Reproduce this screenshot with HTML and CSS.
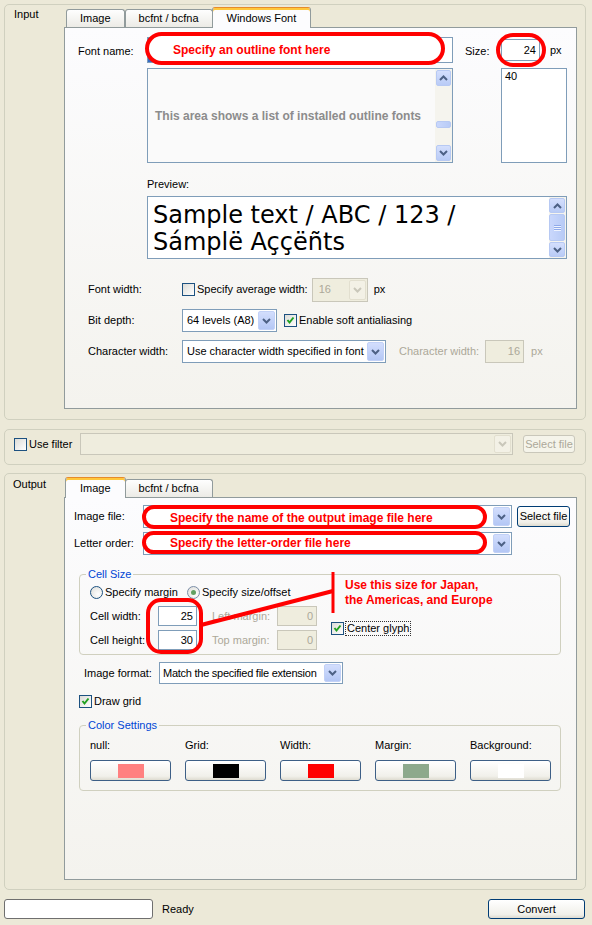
FILE: index.html
```html
<!DOCTYPE html>
<html>
<head>
<meta charset="utf-8">
<title>Font Converter</title>
<link rel="stylesheet" href="styles.css">
</head>
<body>
<div class="window">

  <section class="group group-input">
    <div class="group-label">Input</div>
    <div class="tabwidget tw-input">
      <div class="tabbar">
        <div class="tab">Image</div>
        <div class="tab">bcfnt / bcfna</div>
        <div class="tab active">Windows Font</div>
      </div>
      <div class="pane pane-input">
        <div class="top-block">
          <div class="fn-label">Font name:</div>
          <div class="fn-col">
            <div class="fn-field"><span class="sel"></span></div>
            <div class="fn-list">
              <div class="fn-list-body">This area shows a list of installed outline fonts</div>
              <div class="vscroll">
                <div class="sb-btn"><svg width="9" height="6" viewBox="0 0 9 6"><path d="M1 5 L4.5 1.5 L8 5" fill="none" stroke="#4d6185" stroke-width="2"/></svg></div>
                <div class="sb-track"><div class="sb-thumb tiny"></div></div>
                <div class="sb-btn"><svg width="9" height="6" viewBox="0 0 9 6"><path d="M1 1 L4.5 4.5 L8 1" fill="none" stroke="#4d6185" stroke-width="2"/></svg></div>
              </div>
            </div>
          </div>
          <div class="size-label">Size:</div>
          <div class="size-col">
            <div class="size-row"><div class="tf size-field">24</div><span class="px-size">px</span></div>
            <div class="size-list">40</div>
          </div>
        </div>

        <div class="preview-block">
          <div class="preview-label">Preview:</div>
          <div class="preview-box">
            <div class="preview-text">Sample text / ABC / 123 /<br>Sámplë Aççëñts</div>
            <div class="vscroll">
              <div class="sb-btn"><svg width="9" height="6" viewBox="0 0 9 6"><path d="M1 5 L4.5 1.5 L8 5" fill="none" stroke="#4d6185" stroke-width="2"/></svg></div>
              <div class="sb-track"><div class="sb-thumb full"><span class="grip"></span><span class="grip"></span><span class="grip"></span></div></div>
              <div class="sb-btn"><svg width="9" height="6" viewBox="0 0 9 6"><path d="M1 1 L4.5 4.5 L8 1" fill="none" stroke="#4d6185" stroke-width="2"/></svg></div>
            </div>
          </div>
        </div>

        <div class="form">
          <div class="frow">
            <div class="flabel">Font width:</div>
            <span class="cb"></span><span class="cbt">Specify average width:</span>
            <div class="combo dis c-avg"><span class="ct">16</span><span class="dd"><svg width="9" height="6" viewBox="0 0 9 6"><path d="M1 1 L4.5 4.5 L8 1" fill="none" stroke="#c9c7ba" stroke-width="2"/></svg></span></div>
            <span class="px-avg">px</span>
          </div>
          <div class="frow">
            <div class="flabel">Bit depth:</div>
            <div class="combo c-bit"><span class="ct">64 levels (A8)</span><span class="dd"><svg width="9" height="6" viewBox="0 0 9 6"><path d="M1 1 L4.5 4.5 L8 1" fill="none" stroke="#4d6185" stroke-width="2"/></svg></span></div>
            <span class="cb on cb-soft"><svg width="9" height="9" viewBox="0 0 9 9"><path d="M1.5 4 L3.5 6.5 L7.5 1.5" fill="none" stroke="#21a121" stroke-width="2"/></svg></span><span class="cbt">Enable soft antialiasing</span>
          </div>
          <div class="frow">
            <div class="flabel">Character width:</div>
            <div class="combo c-cw"><span class="ct">Use character width specified in font</span><span class="dd"><svg width="9" height="6" viewBox="0 0 9 6"><path d="M1 1 L4.5 4.5 L8 1" fill="none" stroke="#4d6185" stroke-width="2"/></svg></span></div>
            <span class="dis-label cw-label">Character width:</span>
            <div class="tf dis cw-field">16</div>
            <span class="dis-label px-cw">px</span>
          </div>
        </div>
      </div>
    </div>
  </section>

  <section class="group group-filter">
    <div class="filter-check"><span class="cb"></span><span class="cbt">Use filter</span></div>
    <div class="combo dis filter-combo"><span class="ct"></span><span class="dd"><svg width="9" height="6" viewBox="0 0 9 6"><path d="M1 1 L4.5 4.5 L8 1" fill="none" stroke="#c9c7ba" stroke-width="2"/></svg></span></div>
    <div class="btn dis btn-filter">Select file</div>
  </section>

  <section class="group group-output">
    <div class="group-label">Output</div>
    <div class="tabwidget tw-output">
      <div class="tabbar">
        <div class="tab active">Image</div>
        <div class="tab">bcfnt / bcfna</div>
      </div>
      <div class="pane pane-output">
        <div class="orow first">
          <div class="olabel">Image file:</div>
          <div class="combo ocombo"><span class="ct"></span><span class="dd"><svg width="9" height="6" viewBox="0 0 9 6"><path d="M1 1 L4.5 4.5 L8 1" fill="none" stroke="#4d6185" stroke-width="2"/></svg></span></div>
          <div class="btn btn-select">Select file</div>
        </div>
        <div class="orow">
          <div class="olabel">Letter order:</div>
          <div class="combo ocombo"><span class="ct"></span><span class="dd"><svg width="9" height="6" viewBox="0 0 9 6"><path d="M1 1 L4.5 4.5 L8 1" fill="none" stroke="#4d6185" stroke-width="2"/></svg></span></div>
        </div>

        <fieldset class="fs fs-cell">
          <legend>Cell Size</legend>
          <div class="radios">
            <div class="radio-item r1"><span class="rb"></span><span class="rbt">Specify margin</span></div>
            <div class="radio-item"><span class="rb on"></span><span class="rbt">Specify size/offset</span></div>
          </div>
          <div class="cell-area">
            <div class="cell-grid">
              <div class="crow">
                <span class="clabel">Cell width:</span><div class="tf cfield">25</div>
                <span class="dis-label clabel2">Left margin:</span><div class="tf dis cfield2">0</div>
              </div>
              <div class="crow">
                <span class="clabel">Cell height:</span><div class="tf cfield">30</div>
                <span class="dis-label clabel2">Top margin:</span><div class="tf dis cfield2">0</div>
              </div>
            </div>
            <span class="cb on cb-center"><svg width="9" height="9" viewBox="0 0 9 9"><path d="M1.5 4 L3.5 6.5 L7.5 1.5" fill="none" stroke="#21a121" stroke-width="2"/></svg></span><span class="cbt focus">Center glyph</span>
          </div>
        </fieldset>

        <div class="orow fmt-row">
          <div class="olabel fmt-label">Image format:</div>
          <div class="combo c-fmt"><span class="ct">Match the specified file extension</span><span class="dd"><svg width="9" height="6" viewBox="0 0 9 6"><path d="M1 1 L4.5 4.5 L8 1" fill="none" stroke="#4d6185" stroke-width="2"/></svg></span></div>
        </div>

        <div class="grid-row"><span class="cb on"><svg width="9" height="9" viewBox="0 0 9 9"><path d="M1.5 4 L3.5 6.5 L7.5 1.5" fill="none" stroke="#21a121" stroke-width="2"/></svg></span><span class="cbt">Draw grid</span></div>

        <fieldset class="fs fs-color">
          <legend>Color Settings</legend>
          <div class="colors">
            <div class="color-item"><div class="color-label">null:</div><div class="btn color-btn"><span class="swatch sw-null"></span></div></div>
            <div class="color-item"><div class="color-label">Grid:</div><div class="btn color-btn"><span class="swatch sw-grid"></span></div></div>
            <div class="color-item"><div class="color-label">Width:</div><div class="btn color-btn"><span class="swatch sw-width"></span></div></div>
            <div class="color-item"><div class="color-label">Margin:</div><div class="btn color-btn"><span class="swatch sw-margin"></span></div></div>
            <div class="color-item"><div class="color-label">Background:</div><div class="btn color-btn"><span class="swatch sw-bg"></span></div></div>
          </div>
        </fieldset>
      </div>
    </div>
  </section>

  <div class="statusbar">
    <div class="progress"></div>
    <span class="ready">Ready</span>
    <div class="btn btn-convert">Convert</div>
  </div>

  <svg class="annot" width="592" height="925" viewBox="0 0 592 925">
    <rect x="147" y="34" width="296" height="29" rx="14.5" fill="#fff" stroke="#f00" stroke-width="4"/>
    <rect x="498" y="35" width="46" height="30" rx="15" fill="none" stroke="#f00" stroke-width="4"/>
    <rect x="144" y="507" width="341" height="20" rx="10" fill="#fff" stroke="#f00" stroke-width="4"/>
    <rect x="144" y="533" width="341" height="19" rx="9.5" fill="#fff" stroke="#f00" stroke-width="4"/>
    <rect x="148" y="600" width="53" height="52" rx="13" fill="none" stroke="#f00" stroke-width="4"/>
    <line x1="201" y1="625" x2="333" y2="591" stroke="#f00" stroke-width="4"/>
    <line x1="333" y1="572" x2="333" y2="613" stroke="#f00" stroke-width="3"/>
  </svg>
  <div class="note note-font">Specify an outline font here</div>
  <div class="note note-image">Specify the name of the output image file here</div>
  <div class="note note-order">Specify the letter-order file here</div>
  <div class="note note-size">Use this size for Japan,<br>the Americas, and Europe</div>
</div>
</body>
</html>
```

FILE: styles.css
```css
* { box-sizing: border-box; }
html, body { margin: 0; padding: 0; }
body {
  background: #ece9d8;
  font-family: "Liberation Sans", Arial, sans-serif;
  font-size: 11px;
  line-height: 13px;
  color: #000;
}
.window {
  position: relative;
  width: 592px;
  height: 925px;
  padding-top: 4px;
  overflow: hidden;
}

/* group boxes */
.group {
  margin-left: 4px;
  width: 582px;
  border: 1px solid #d0d0bf;
  border-radius: 5px;
}
.group-input { height: 416px; display: flex; }
.group-output { height: 417px; display: flex; margin-top: 8px; }
.group-label { width: 59px; flex: none; padding: 3px 0 0 9px; }
.group-output .group-label { padding: 4px 0 0 8px; }

/* tabs */
.tabwidget { width: 513px; display: flex; flex-direction: column; }
.tw-input { margin-top: 2px; }
.tw-output { margin-top: 3px; }
.tabbar {
  display: flex;
  align-items: flex-end;
  height: 20px;
  padding-left: 2px;
  position: relative;
  z-index: 1;
}
.tab {
  height: 18px;
  padding: 0 13px;
  border: 1px solid #919b9c;
  border-bottom: none;
  border-radius: 3px 3px 0 0;
  background: linear-gradient(#fefefe, #ecebe6);
  line-height: 17px;
  white-space: nowrap;
}
.tab.active {
  height: 21px;
  margin: 0 -1px -1px -1px;
  padding: 2px 14px 0;
  border-top: 1px solid #e68b2c;
  box-shadow: inset 0 2px 0 #ffc73c;
  background: #fcfcfe;
  line-height: 17px;
}
.pane {
  border: 1px solid #919b9c;
  background: linear-gradient(#fcfcfe, #f4f3ee);
}
.pane-input { height: 382px; }
.pane-output { height: 383px; }

/* common widgets */
.tf {
  border: 1px solid #7f9db9;
  background: #fff;
  text-align: right;
  padding-right: 3px;
  flex: none;
}
.tf.dis { border-color: #c9c7ba; background: #efedde; color: #aca899; }
.dis-label { color: #aca899; }

.combo {
  display: flex;
  height: 23px;
  border: 1px solid #7f9db9;
  background: #fff;
  flex: none;
}
.combo .ct {
  flex: 1;
  padding-left: 4px;
  line-height: 21px;
  white-space: nowrap;
  overflow: hidden;
}
.combo .dd {
  width: 17px;
  flex: none;
  margin: 1px;
  border: 1px solid #c2d1f7;
  border-radius: 2px;
  background: linear-gradient(#d3defd, #b4c7f5);
  display: flex;
  align-items: center;
  justify-content: center;
}
.combo.dis { border-color: #c9c7ba; background: #efedde; color: #aca899; }
.combo.dis .dd { border-color: #e2dfcf; background: #f3f1e6; }

.cb {
  width: 13px;
  height: 13px;
  flex: none;
  border: 1px solid #1c5180;
  background: linear-gradient(135deg, #dcdcd7, #fff);
  display: flex;
  align-items: center;
  justify-content: center;
}
.cbt { margin-left: 2px; white-space: nowrap; }
.cbt.focus { outline: 1px dotted #333; outline-offset: 0; padding: 0 1px; }

.rb {
  width: 13px;
  height: 13px;
  flex: none;
  border-radius: 50%;
  border: 1px solid #1c5180;
  background: radial-gradient(circle at 65% 65%, #fff, #dcdcd7);
  display: flex;
  align-items: center;
  justify-content: center;
}
.rb.on { border-color: #7b8ea8; }
.rb.on::after {
  content: "";
  width: 5px;
  height: 5px;
  border-radius: 50%;
  background: #62a062;
}
.rbt { margin-left: 2px; white-space: nowrap; }

.btn {
  border: 1px solid #003c74;
  border-radius: 3px;
  background: linear-gradient(#ffffff, #f1f0ea 80%, #dedbd0);
  text-align: center;
  flex: none;
  white-space: nowrap;
}
.btn.dis { border-color: #c9c7ba; background: #f5f4ea; color: #aca899; }

/* scrollbars */
.vscroll {
  width: 17px;
  flex: none;
  display: flex;
  flex-direction: column;
  background: #f5f4ee;
  padding: 1px 1px;
}
.sb-btn {
  height: 16px;
  flex: none;
  border: 1px solid #b7c9f3;
  border-radius: 2px;
  background: linear-gradient(#d4dffd, #b9cbf6);
  display: flex;
  align-items: center;
  justify-content: center;
}
.sb-track { flex: 1; display: flex; flex-direction: column; }
.sb-thumb {
  border: 1px solid #b7c9f3;
  border-radius: 2px;
  background: linear-gradient(90deg, #c9d7fc, #b8cbf6);
}
.sb-thumb.tiny { margin-top: 35px; height: 7px; }
.sb-thumb.full {
  flex: 1;
  margin: 1px 0;
  display: flex;
  flex-direction: column;
  align-items: center;
  justify-content: center;
  gap: 1px;
}
.grip { width: 7px; height: 1px; background: #8faaea; box-shadow: 0 1px 0 #eef3fe; }

/* input pane */
.top-block { display: flex; margin-top: 9px; }
.fn-label { width: 82px; flex: none; padding: 1px 0 0 13px; line-height: 26px; }
.fn-col { width: 306px; flex: none; }
.fn-field {
  height: 26px;
  border: 1px solid #7f9db9;
  background: #fff;
  display: flex;
}
.fn-field .sel { width: 120px; background: #316ac5; }
.fn-list {
  height: 95px;
  margin-top: 5px;
  border: 1px solid #7f9db9;
  background: #fafafa;
  display: flex;
}
.fn-list-body {
  flex: 1;
  display: flex;
  align-items: center;
  padding-left: 7px;
  padding-top: 1px;
  font-size: 12px;
  font-weight: bold;
  color: #8c8c8c;
  white-space: nowrap;
  overflow: hidden;
}
.size-label { width: 48px; flex: none; padding: 1px 0 0 12px; line-height: 26px; }
.size-col { width: 66px; flex: none; }
.size-row { display: flex; align-items: center; height: 26px; }
.size-field { width: 39px; height: 22px; line-height: 20px; }
.px-size { margin-left: 10px; }
.size-list {
  height: 95px;
  margin-top: 5px;
  border: 1px solid #7f9db9;
  background: #fff;
  padding: 1px 0 0 3px;
}

.preview-block { margin-left: 82px; }
.preview-label { margin-top: 15px; }
.preview-box {
  width: 420px;
  height: 63px;
  margin-top: 5px;
  border: 1px solid #7f9db9;
  background: #fff;
  display: flex;
}
.preview-text {
  flex: 1;
  padding: 5px 0 0 5px;
  font-family: "DejaVu Sans", sans-serif;
  font-size: 24px;
  line-height: 27px;
  white-space: nowrap;
  overflow: hidden;
}
.preview-box .vscroll { padding: 1px 1px 1px 0; }
.preview-box .sb-btn { height: 15px; }

.form { padding-left: 23px; margin-top: 19px; }
.frow { display: flex; align-items: center; height: 23px; }
.frow + .frow { margin-top: 8px; }
.flabel { width: 94px; flex: none; }
.c-avg { width: 56px; height: 24px; margin-left: 4px; }
.c-avg .ct { padding-left: 6px; }
.px-avg { margin-left: 6px; }
.c-bit { width: 95px; }
.cb-soft { margin-left: 7px; }
.c-cw { width: 204px; }
.cw-label { margin-left: 13px; }
.cw-field { width: 39px; height: 23px; line-height: 21px; margin-left: 6px; }
.px-cw { margin-left: 7px; }

/* filter group */
.group-filter {
  margin-top: 9px;
  height: 36px;
  display: flex;
  align-items: flex-start;
  padding: 3px 0 0 9px;
}
.filter-check { width: 66px; height: 22px; display: flex; align-items: center; flex: none; }
.filter-combo { width: 433px; height: 22px; border-color: #b5bdc8; background: #f3f1e6; }
.btn-filter { margin: 2px 0 0 10px; width: 52px; height: 18px; line-height: 16px; }

/* output pane */
.orow { display: flex; align-items: center; height: 23px; margin-top: 4px; }
.orow.first { margin-top: 7px; }
.olabel { width: 78px; flex: none; padding-left: 9px; }
.ocombo { width: 369px; }
.btn-select { margin-left: 5px; width: 53px; height: 21px; line-height: 19px; }

.fs {
  margin: 0 0 0 14px;
  width: 482px;
  min-width: 0;
  border: 1px solid #d0d0bf;
  border-radius: 4px;
}
.fs legend {
  padding: 0 2px;
  margin-left: -4px;
  line-height: 13px;
  color: #0046d5;
}
.fs-cell { margin-top: 13px; padding: 5px 0 4px 10px; }
.radios { display: flex; align-items: center; height: 13px; }
.radio-item { display: flex; align-items: center; }
.radio-item.r1 { width: 97px; }
.cell-area { display: flex; align-items: center; margin-top: 7px; }
.crow { display: flex; align-items: center; height: 20px; }
.crow + .crow { margin-top: 4px; }
.clabel { width: 68px; flex: none; }
.cfield { width: 39px; height: 20px; line-height: 18px; }
.clabel2 { width: 65px; flex: none; margin-left: 15px; }
.cfield2 { width: 40px; height: 20px; line-height: 18px; }
.cb-center { margin-left: 14px; }

.fmt-row { margin-top: 7px; height: 22px; }
.fmt-label { width: 94px; padding-left: 19px; }
.c-fmt { width: 184px; height: 22px; }
.c-fmt .ct { line-height: 20px; padding-left: 3px; letter-spacing: -0.25px; }

.grid-row { display: flex; align-items: center; margin: 11px 0 0 14px; height: 13px; }

.fs-color { margin-top: 11px; padding: 7px 0 9px 10px; }
.colors { display: grid; grid-template-columns: repeat(5, 81px); column-gap: 14px; }
.color-label { height: 13px; }
.color-btn {
  margin-top: 8px;
  height: 21px;
  border-color: #3d5f86;
  display: flex;
  align-items: center;
  justify-content: center;
}
.swatch { width: 26px; height: 14px; }
.sw-null { background: #ff8080; }
.sw-grid { background: #000; }
.sw-width { background: #ff0000; }
.sw-margin { background: #8da98c; }
.sw-bg { background: #fff; }

/* status bar */
.statusbar {
  display: flex;
  align-items: center;
  height: 20px;
  margin-top: 9px;
  padding: 0 7px 0 4px;
}
.progress {
  width: 149px;
  height: 20px;
  border: 1px solid #6f6f6f;
  border-radius: 3px;
  background: #fff;
}
.ready { margin-left: 9px; }
.btn-convert { margin-left: auto; width: 97px; height: 20px; line-height: 18px; }

/* annotations overlay */
.annot { position: absolute; left: 0; top: 0; pointer-events: none; z-index: 5; }
.note {
  position: absolute;
  z-index: 6;
  color: #f00;
  font-weight: bold;
  font-size: 12px;
  line-height: 14px;
  white-space: nowrap;
}
.note-font { left: 173px; top: 43px; }
.note-image { left: 170px; top: 511px; }
.note-order { left: 170px; top: 536px; }
.note-size { left: 345px; top: 578px; line-height: 14.5px; }
```
